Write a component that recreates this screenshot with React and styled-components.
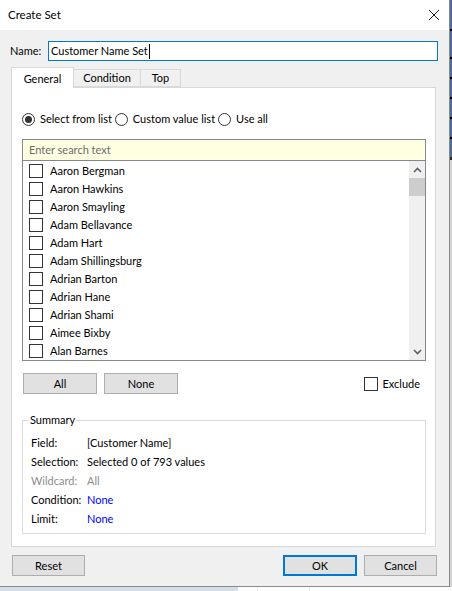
import React from "react";
import styled, { createGlobalStyle } from "styled-components";

const GlobalStyle = createGlobalStyle`
  html, body { margin: 0; padding: 0; }
  body {
    width: 452px;
    height: 591px;
    overflow: hidden;
    background: #ffffff;
    font-family: "Segoe UI", Lato, "Noto Sans", sans-serif;
    font-size: 11px;
    color: #000;
  }
  * { box-sizing: border-box; }
`;

const Screen = styled.div`
  display: grid;
  grid-template-columns: 450px 2px;
  grid-template-rows: 587px 4px;
  width: 452px;
  height: 591px;
`;

const SideStrip = styled.div`
  background:
    linear-gradient(#000, #000) 0 29px / 2px 2px no-repeat,
    linear-gradient(#000, #000) 0 57px / 2px 2px no-repeat,
    linear-gradient(#000, #000) 0 77px / 2px 2px no-repeat,
    linear-gradient(#000, #000) 0 97px / 2px 2px no-repeat,
    linear-gradient(#000, #000) 0 117px / 2px 2px no-repeat,
    linear-gradient(#000, #000) 0 137px / 2px 2px no-repeat,
    linear-gradient(#4b6c99 0 157px, #2a2a2a 157px 160px, #d4d4d4 160px);
`;

const BottomStrip = styled.div`
  grid-column: 1 / span 2;
  background: linear-gradient(90deg, #d5dde6 0 238px, #ffffff 238px 257px, #e9e9e9 257px 258px, #ffffff 258px 309px, #e9e9e9 309px 310px, #ffffff 310px);
`;

const Dialog = styled.div`
  display: flex;
  flex-direction: column;
  background: #f0f0f0;
  border-right: 1px solid #8a8a8a;
  border-bottom: 1px solid #8a8a8a;
`;

const TitleBar = styled.div`
  height: 30px;
  flex: none;
  background: #ffffff;
  display: flex;
  align-items: center;
  justify-content: space-between;
  padding: 0 8px 0 8px;
`;

const Title = styled.span`
  font-size: 11.5px;
  line-height: 16px;
`;

const CloseButton = styled.span`
  width: 12px;
  height: 12px;
  display: flex;
  margin-right: 1px;
`;

const Body = styled.div`
  flex: 1;
  display: flex;
  flex-direction: column;
  padding: 11px 11px 10px 10px;
`;

const NameRow = styled.div`
  display: flex;
  align-items: center;
  height: 20px;
`;

const NameLabel = styled.label`
  width: 38px;
  flex: none;
  line-height: 16px;
`;

const NameInput = styled.div`
  flex: 1;
  height: 20px;
  border: 1px solid #0078d7;
  background: #fff;
  display: flex;
  align-items: center;
  padding-left: 2px;
  line-height: 16px;
`;

const Caret = styled.span`
  display: inline-block;
  width: 1px;
  height: 15px;
  background: #000;
  margin-left: 1px;
`;

const TabStrip = styled.div`
  display: flex;
  align-items: flex-end;
  margin: 6px 0 0 1px;
  height: 20px;
  position: relative;
  z-index: 1;
`;

const Tab = styled.div`
  height: ${(p) => (p.$active ? "21px" : "18px")};
  width: ${(p) => p.$w}px;
  margin-bottom: ${(p) => (p.$active ? "-1px" : "0")};
  background: ${(p) => (p.$active ? "#ffffff" : "#f0f0f0")};
  border: 1px solid #d9d9d9;
  border-bottom: ${(p) => (p.$active ? "none" : "1px solid #d9d9d9")};
  margin-left: ${(p) => (p.$first ? "0" : "-1px")};
  display: flex;
  align-items: ${(p) => (p.$active ? "flex-start" : "center")};
  justify-content: center;
  padding-top: ${(p) => (p.$active ? "3px" : "0")};
  line-height: 16px;
`;

const Panel = styled.div`
  margin-left: 1px;
  width: 425px;
  height: 460px;
  background: #ffffff;
  border: 1px solid #d9d9d9;
  display: flex;
  flex-direction: column;
  padding: 23px 9px 12px 10px;
`;

const RadioRow = styled.div`
  display: flex;
  align-items: center;
  height: 16px;
`;

const RadioOption = styled.label`
  display: flex;
  align-items: center;
  margin-right: 3px;
  line-height: 16px;
`;

const RadioCircle = styled.span`
  width: 13px;
  height: 13px;
  border-radius: 50%;
  border: 1px solid #333;
  display: flex;
  align-items: center;
  justify-content: center;
  margin-right: 5px;
  &::after {
    content: "";
    width: 7px;
    height: 7px;
    border-radius: 50%;
    background: ${(p) => (p.$checked ? "#333" : "transparent")};
  }
`;

const ListBox = styled.div`
  margin-top: 12px;
  border: 1px solid #828790;
  display: flex;
  flex-direction: column;
`;

const SearchField = styled.div`
  height: 21px;
  background: #ffffe1;
  border-bottom: 1px solid #828790;
  color: #6d6d6d;
  padding-left: 6px;
  display: flex;
  align-items: center;
  line-height: 16px;
`;

const ListArea = styled.div`
  height: 199px;
  display: flex;
`;

const Items = styled.div`
  flex: 1;
  overflow: hidden;
  padding-top: 1px;
`;

const Item = styled.div`
  height: 18px;
  display: flex;
  align-items: center;
  padding-left: 6px;
  line-height: 16px;
`;

const CheckBox = styled.span`
  width: 14px;
  height: 14px;
  border: 1px solid #333;
  background: #fff;
  flex: none;
  margin-right: ${(p) => p.$gap || 7}px;
`;

const ScrollBar = styled.div`
  width: 16px;
  background: #f0f0f0;
  display: flex;
  flex-direction: column;
  align-items: stretch;
`;

const ScrollArrow = styled.div`
  height: 17px;
  display: flex;
  align-items: center;
  justify-content: center;
`;

const ScrollThumb = styled.div`
  height: 18px;
  background: #cdcdcd;
`;

const ScrollTrack = styled.div`
  flex: 1;
`;

const ButtonRow = styled.div`
  display: flex;
  align-items: center;
  margin-top: 12px;
  padding-left: 1px;
  gap: 7px;
`;

const Button = styled.button`
  font: inherit;
  font-size: 11px;
  line-height: 16px;
  color: #000;
  width: ${(p) => p.$w || 74}px;
  height: 21px;
  padding: 0;
  background: #e1e1e1;
  border: ${(p) => (p.$primary ? "2px solid #0078d7" : "1px solid #adadad")};
  border-radius: 0;
`;

const ExcludeOption = styled.label`
  margin-left: auto;
  margin-right: 6px;
  display: flex;
  align-items: center;
  line-height: 16px;
`;

const Summary = styled.div`
  position: relative;
  margin-top: 26px;
  border: 1px solid #dcdcdc;
  padding: 12px 0 4px 8px;
  height: 114px;
`;

const Legend = styled.span`
  position: absolute;
  top: -9px;
  left: 6px;
  padding: 0 1px;
  background: #fff;
  line-height: 16px;
`;

const SummaryRow = styled.div`
  display: flex;
  height: 19px;
  align-items: center;
  line-height: 16px;
  color: ${(p) => (p.$muted ? "#8c8c8c" : "#000")};
`;

const SummaryLabel = styled.span`
  width: 56px;
  flex: none;
`;

const SummaryValue = styled.span`
  color: ${(p) => (p.$link ? "#0000ff" : "inherit")};
`;

const Footer = styled.div`
  display: flex;
  align-items: center;
  margin-top: 8px;
  padding: 0 1px 0 2px;
  gap: 7px;
`;

const Spacer = styled.div`
  flex: 1;
`;

const Chevron = ({ up }) => (
  <svg width="9" height="6" viewBox="0 0 9 6">
    <polyline
      points={up ? "1,5 4.5,1.5 8,5" : "1,1 4.5,4.5 8,1"}
      fill="none"
      stroke="#606060"
      strokeWidth="1.6"
    />
  </svg>
);

const names = [
  "Aaron Bergman",
  "Aaron Hawkins",
  "Aaron Smayling",
  "Adam Bellavance",
  "Adam Hart",
  "Adam Shillingsburg",
  "Adrian Barton",
  "Adrian Hane",
  "Adrian Shami",
  "Aimee Bixby",
  "Alan Barnes",
];

export default function App() {
  return (
    <>
      <GlobalStyle />
      <Screen>
        <Dialog>
          <TitleBar>
            <Title>Create Set</Title>
            <CloseButton>
              <svg width="12" height="12" viewBox="0 0 12 12">
                <path d="M1 1 L11 11 M11 1 L1 11" stroke="#1a1a1a" strokeWidth="1" />
              </svg>
            </CloseButton>
          </TitleBar>
          <Body>
            <NameRow>
              <NameLabel>Name:</NameLabel>
              <NameInput>
                Customer Name Set
                <Caret />
              </NameInput>
            </NameRow>
            <TabStrip>
              <Tab $active $first $w={63}>General</Tab>
              <Tab $w={68}>Condition</Tab>
              <Tab $w={41}>Top</Tab>
            </TabStrip>
            <Panel>
              <RadioRow>
                <RadioOption>
                  <RadioCircle $checked />
                  Select from list
                </RadioOption>
                <RadioOption>
                  <RadioCircle />
                  Custom value list
                </RadioOption>
                <RadioOption>
                  <RadioCircle />
                  Use all
                </RadioOption>
              </RadioRow>
              <ListBox>
                <SearchField>Enter search text</SearchField>
                <ListArea>
                  <Items>
                    {names.map((n) => (
                      <Item key={n}>
                        <CheckBox />
                        {n}
                      </Item>
                    ))}
                  </Items>
                  <ScrollBar>
                    <ScrollArrow>
                      <Chevron up />
                    </ScrollArrow>
                    <ScrollThumb />
                    <ScrollTrack />
                    <ScrollArrow>
                      <Chevron />
                    </ScrollArrow>
                  </ScrollBar>
                </ListArea>
              </ListBox>
              <ButtonRow>
                <Button>All</Button>
                <Button>None</Button>
                <ExcludeOption>
                  <CheckBox $gap={4} />
                  Exclude
                </ExcludeOption>
              </ButtonRow>
              <Summary>
                <Legend>Summary</Legend>
                <SummaryRow>
                  <SummaryLabel>Field:</SummaryLabel>
                  <SummaryValue>[Customer Name]</SummaryValue>
                </SummaryRow>
                <SummaryRow>
                  <SummaryLabel>Selection:</SummaryLabel>
                  <SummaryValue>Selected 0 of 793 values</SummaryValue>
                </SummaryRow>
                <SummaryRow $muted>
                  <SummaryLabel>Wildcard:</SummaryLabel>
                  <SummaryValue>All</SummaryValue>
                </SummaryRow>
                <SummaryRow>
                  <SummaryLabel>Condition:</SummaryLabel>
                  <SummaryValue $link>None</SummaryValue>
                </SummaryRow>
                <SummaryRow>
                  <SummaryLabel>Limit:</SummaryLabel>
                  <SummaryValue $link>None</SummaryValue>
                </SummaryRow>
              </Summary>
            </Panel>
            <Footer>
              <Button $w={73}>Reset</Button>
              <Spacer />
              <Button $primary $w={74}>OK</Button>
              <Button $w={73}>Cancel</Button>
            </Footer>
          </Body>
        </Dialog>
        <SideStrip />
        <BottomStrip />
      </Screen>
    </>
  );
}
